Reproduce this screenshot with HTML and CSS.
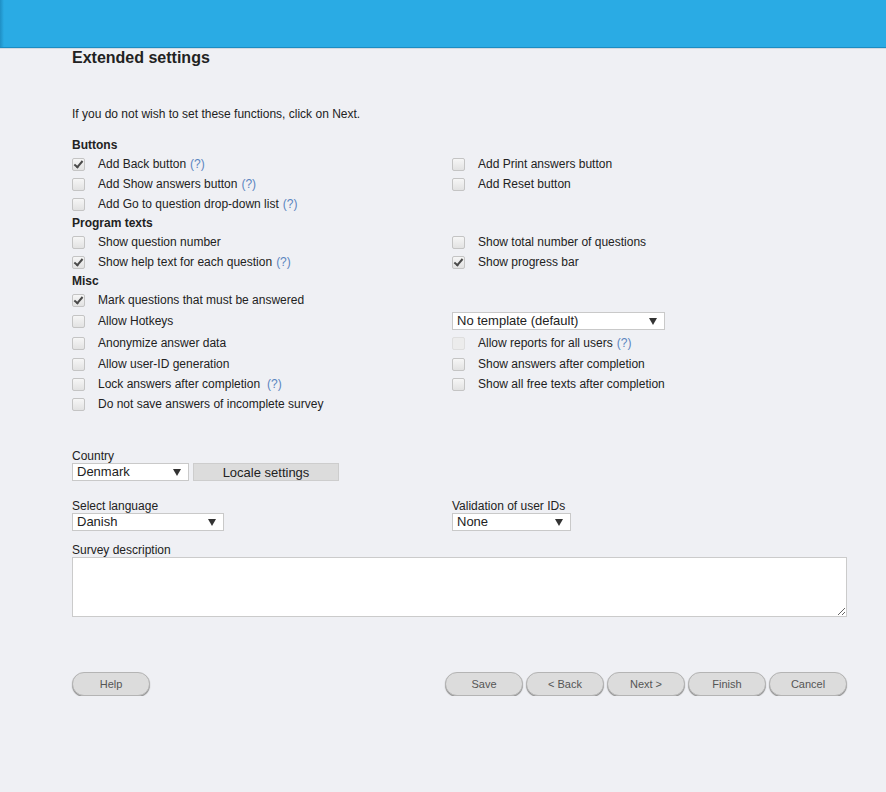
FILE: index.html
```html
<!DOCTYPE html>
<html>
<head>
<meta charset="utf-8">
<title>Extended settings</title>
<link rel="stylesheet" href="styles.css">
</head>
<body>
<header class="topbar"></header>
<main class="page">
  <h1 class="title">Extended settings</h1>
  <p class="intro">If you do not wish to set these functions, click on Next.</p>

  <div class="grid">
    <div class="heading full">Buttons</div>
    <label class="opt"><span class="cb checked"></span>Add Back button <span class="help">(?)</span></label>
    <label class="opt"><span class="cb"></span>Add Print answers button</label>
    <label class="opt"><span class="cb"></span>Add Show answers button <span class="help">(?)</span></label>
    <label class="opt"><span class="cb"></span>Add Reset button</label>
    <label class="opt"><span class="cb"></span>Add Go to question drop-down list <span class="help">(?)</span></label>
    <div class="opt"></div>

    <div class="heading full">Program texts</div>
    <label class="opt"><span class="cb"></span>Show question number</label>
    <label class="opt"><span class="cb"></span>Show total number of questions</label>
    <label class="opt"><span class="cb checked"></span>Show help text for each question <span class="help">(?)</span></label>
    <label class="opt"><span class="cb checked"></span>Show progress bar</label>

    <div class="heading full">Misc</div>
    <label class="opt"><span class="cb checked"></span>Mark questions that must be answered</label>
    <div class="opt"></div>
    <label class="opt tall"><span class="cb"></span>Allow Hotkeys</label>
    <div class="opt tall"><div class="select w-template">No template (default)</div></div>
    <label class="opt tall"><span class="cb"></span>Anonymize answer data</label>
    <label class="opt tall"><span class="cb disabled"></span>Allow reports for all users <span class="help">(?)</span></label>
    <label class="opt"><span class="cb"></span>Allow user-ID generation</label>
    <label class="opt"><span class="cb"></span>Show answers after completion</label>
    <label class="opt"><span class="cb"></span>Lock answers after completion <span class="help wide">(?)</span></label>
    <label class="opt"><span class="cb"></span>Show all free texts after completion</label>
    <label class="opt"><span class="cb"></span>Do not save answers of incomplete survey</label>
    <div class="opt"></div>
  </div>

  <div class="field country">
    <div class="flabel">Country</div>
    <div class="inline">
      <div class="select w-country">Denmark</div>
      <button class="locale">Locale settings</button>
    </div>
  </div>

  <div class="pair">
    <div class="field">
      <div class="flabel">Select language</div>
      <div class="select w-lang">Danish</div>
    </div>
    <div class="field">
      <div class="flabel">Validation of user IDs</div>
      <div class="select w-valid">None</div>
    </div>
  </div>

  <div class="field desc">
    <div class="flabel">Survey description</div>
    <textarea class="textarea"></textarea>
  </div>

  <div class="actions">
    <button class="pill">Help</button>
    <div class="nav">
      <button class="pill">Save</button>
      <button class="pill">&lt; Back</button>
      <button class="pill">Next &gt;</button>
      <button class="pill">Finish</button>
      <button class="pill">Cancel</button>
    </div>
  </div>
</main>
</body>
</html>
```
FILE: styles.css
```css
html, body {
  margin: 0;
  padding: 0;
}
body {
  background: #eff0f4;
  font-family: "Liberation Sans", Arial, sans-serif;
  font-size: 12px;
  color: #222;
}
.topbar {
  height: 47px;
  background: linear-gradient(to right, #1f8fc4 0, #2aabe4 4px, #2aabe4 100%);
  border-bottom: 1px solid #1b8cc2;
  box-shadow: 0 1px 0 #d3d9e0;
}
.page {
  padding: 0 40px 0 72px;
}
.title {
  margin: 0;
  padding-top: 1px;
  font-size: 16px;
  line-height: 18px;
  font-weight: bold;
  color: #222;
}
.intro {
  margin: 40px 0 0;
  line-height: 14px;
}
.grid {
  display: grid;
  grid-template-columns: 380px 1fr;
  margin-top: 15px;
}
.full {
  grid-column: 1 / -1;
}
.heading {
  font-weight: bold;
  line-height: 18px;
  height: 18px;
}
.opt {
  display: flex;
  align-items: center;
  height: 20px;
  white-space: nowrap;
}
.opt.tall {
  height: 22px;
}
.help {
  color: #5b85c0;
  margin-left: 4px;
}
.help.wide {
  margin-left: 7px;
}
.cb {
  box-sizing: border-box;
  width: 13px;
  height: 13px;
  border: 1px solid #c4c4c4;
  border-radius: 2px;
  background: linear-gradient(#f6f6f6, #e2e2e2);
  margin-right: 13px;
  flex: none;
  position: relative;
}
.cb.checked::after {
  content: "";
  position: absolute;
  left: 3px;
  top: 0px;
  width: 3px;
  height: 7px;
  border: solid #4a4a4a;
  border-width: 0 2px 2px 0;
  transform: rotate(40deg);
}
.cb.disabled {
  border-color: #dedede;
  background: #ececec;
}
.select {
  box-sizing: border-box;
  height: 18px;
  border: 1px solid #c9c9c9;
  background: #fff;
  font-size: 13px;
  line-height: 16px;
  padding-left: 4px;
  color: #222;
  position: relative;
  white-space: nowrap;
}
.select::after {
  content: "";
  position: absolute;
  right: 7px;
  top: 5px;
  border-left: 4px solid transparent;
  border-right: 4px solid transparent;
  border-top: 7px solid #333;
}
.w-template { width: 213px; }
.w-country { width: 117px; }
.w-lang { width: 152px; }
.w-valid { width: 119px; }
.field .flabel {
  line-height: 16px;
  height: 15px;
}
.country {
  margin-top: 34px;
}
.inline {
  display: flex;
  gap: 4px;
}
.locale {
  box-sizing: border-box;
  width: 146px;
  height: 18px;
  margin: 0;
  padding: 0;
  border: 1px solid #cdcdcd;
  background: #dcdcdc;
  font-family: "Liberation Sans", Arial, sans-serif;
  font-size: 13px;
  color: #222;
}
.pair {
  display: grid;
  grid-template-columns: 380px 1fr;
  margin-top: 17px;
}
.desc {
  margin-top: 11px;
}
.textarea {
  display: block;
  box-sizing: border-box;
  width: 775px;
  height: 60px;
  margin: 0;
  border: 1px solid #cbcbcb;
  background: #fff;
  resize: both;
}
.actions {
  display: flex;
  justify-content: space-between;
  width: 775px;
  margin-top: 55px;
}
.nav {
  display: flex;
  gap: 3px;
}
.pill {
  box-sizing: border-box;
  width: 78px;
  height: 24px;
  margin: 0;
  padding: 0;
  border: 1px solid #b4b4b4;
  border-radius: 12px;
  background: #dcdcdc;
  box-shadow: 0 1px 1px #8e8e8e;
  font-family: "Liberation Sans", Arial, sans-serif;
  font-size: 11px;
  color: #555;
}
```
